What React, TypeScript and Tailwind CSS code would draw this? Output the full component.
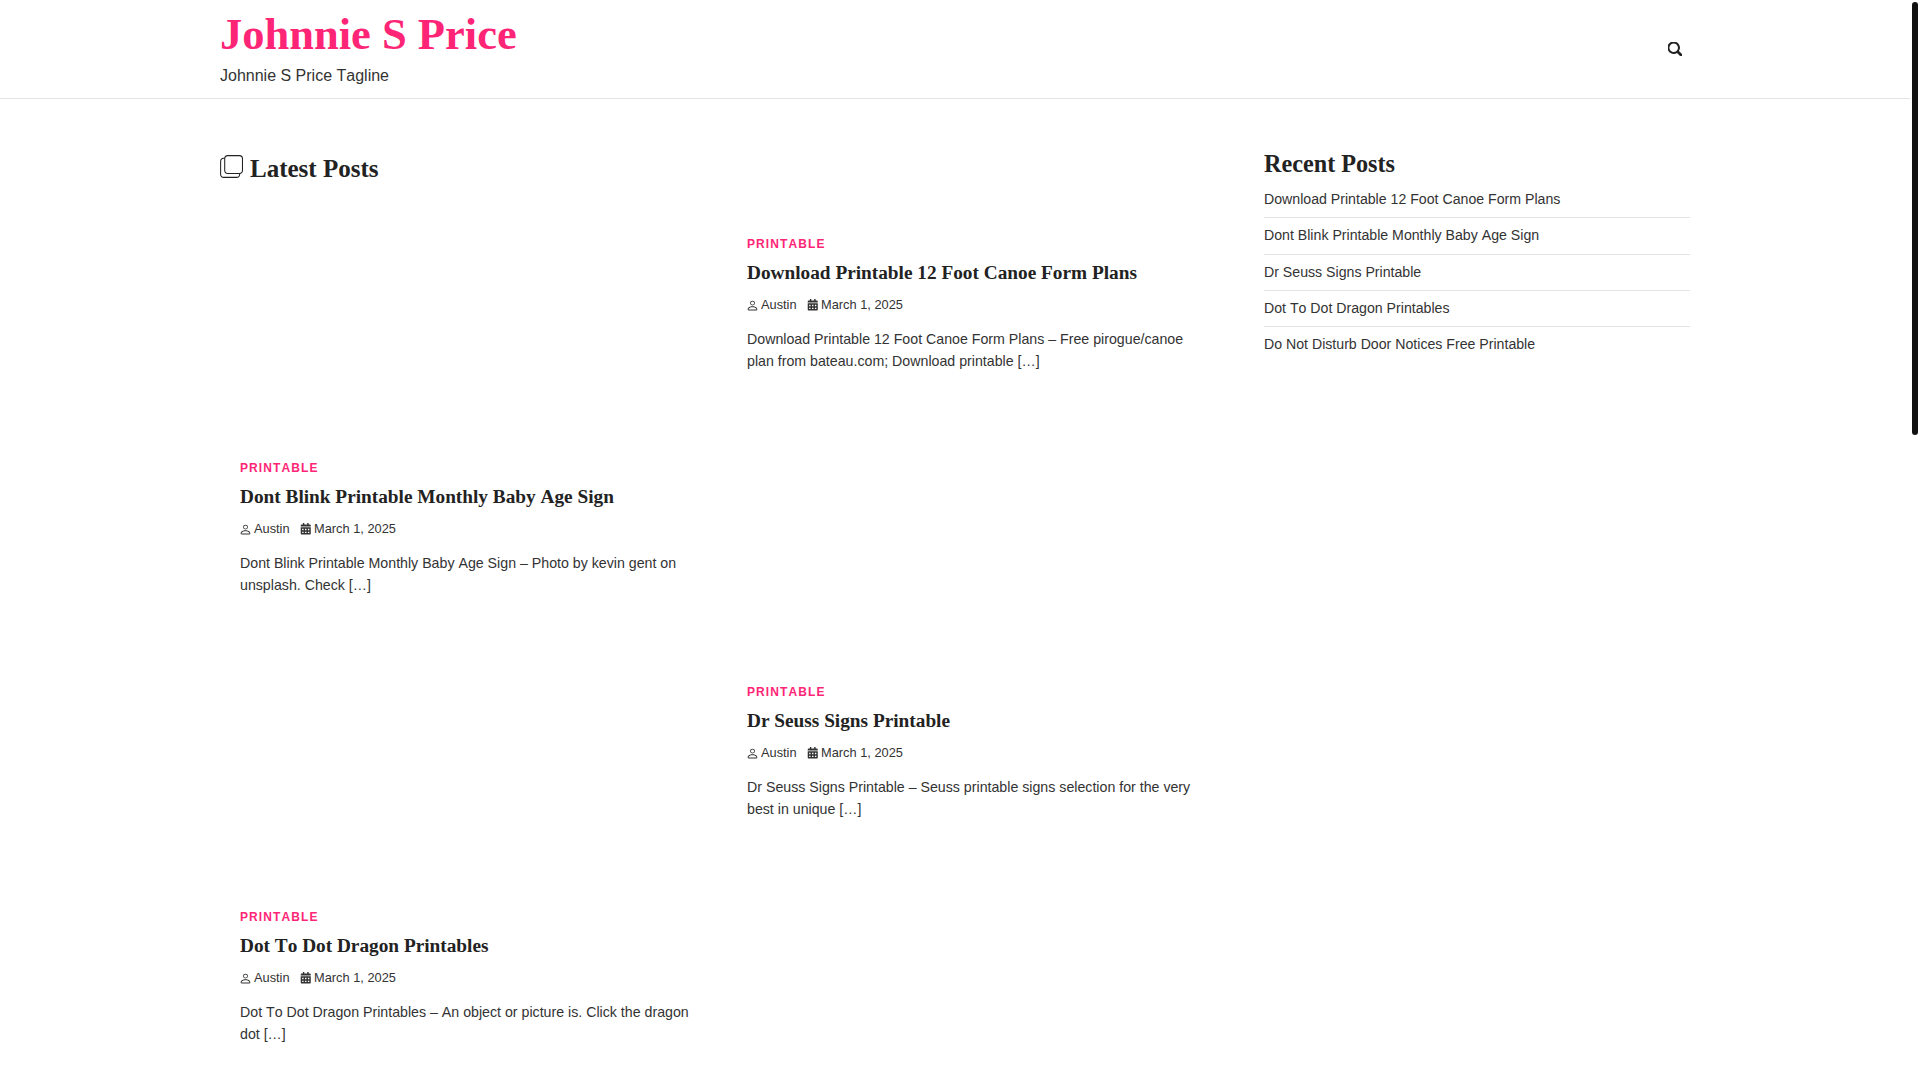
import { BsPerson, BsSearch } from "react-icons/bs";
import { FaCalendarAlt } from "react-icons/fa";

const serif = "font-['Liberation_Serif',serif]";

const recent = [
  "Download Printable 12 Foot Canoe Form Plans",
  "Dont Blink Printable Monthly Baby Age Sign",
  "Dr Seuss Signs Printable",
  "Dot To Dot Dragon Printables",
  "Do Not Disturb Door Notices Free Printable",
];

function PostCard({ title, excerpt, spacer }: { title: string; excerpt: string[]; spacer: string }) {
  return (
    <article className="px-5">
      {/* image area stays blank, pictures did not load */}
      <div className={spacer} />
      <span className="block text-[12px] leading-[14px] font-bold tracking-[1.1px] text-[#ff2576]">PRINTABLE</span>
      <h2 className={`${serif} mt-[9px] text-[19.3px] leading-[26px] font-bold text-[#222222]`}>{title}</h2>
      <div className="mt-[9px] flex items-center gap-[10px] text-[12.8px] leading-[20px] text-[#333333]">
        <span className="flex items-center gap-[2px]">
          <BsPerson className="-ml-[1px] size-[13px]" />
          Austin
        </span>
        <span className="flex items-center gap-[3px]">
          <FaCalendarAlt className="size-[11.5px]" />
          March 1, 2025
        </span>
      </div>
      <p className="mt-[13px] text-[14.2px] leading-[22px] text-[#333333]">
        {excerpt[0]}
        <br />
        {excerpt[1]}
      </p>
    </article>
  );
}

export default function App() {
  return (
    <div className="flex h-screen overflow-hidden bg-white font-['Liberation_Sans',sans-serif] [font-kerning:none]">
      <div className="min-w-0 flex-1">
        <header className="h-[99px] border-b border-[#e4e4e4]">
          <div className="mx-[220px] flex h-full items-start justify-between">
            <div>
              <h1 className={`${serif} mt-[8px] text-[44.5px] leading-[52px] font-bold text-[#ff2576]`}>Johnnie S Price</h1>
              <p className="mt-[4px] text-[16px] leading-[24px] text-[#333333]">Johnnie S Price Tagline</p>
            </div>
            <BsSearch className="mt-[42px] mr-[8px] size-[14px] stroke-[1.2px] text-[#222222]" />
          </div>
        </header>

        <div className="mx-[220px] flex">
          <main className="w-[1004px]">
            <div className="mt-[54px] flex items-center gap-[7px]">
              <svg viewBox="0 0 22 22" fill="none" stroke="#222222" strokeWidth="1" className="mb-[5px] size-[23px]">
                <rect x="4.5" y="0.6" width="17" height="17" rx="3" />
                <path d="M4.5 3.2h-1.1a2.8 2.8 0 0 0-2.8 2.8v12.6a2.8 2.8 0 0 0 2.8 2.8h12.6a2.8 2.8 0 0 0 2.8-2.8v-1.1" />
              </svg>
              <h2 className={`${serif} text-[25px] leading-[32px] font-bold text-[#222222]`}>Latest Posts</h2>
            </div>
            <div className="flex">
              <div className="w-[507px]">
                <PostCard
                  spacer="h-[276px]"
                  title="Dont Blink Printable Monthly Baby Age Sign"
                  excerpt={["Dont Blink Printable Monthly Baby Age Sign – Photo by kevin gent on", "unsplash. Check […]"]}
                />
                <PostCard
                  spacer="h-[314px]"
                  title="Dot To Dot Dragon Printables"
                  excerpt={["Dot To Dot Dragon Printables – An object or picture is. Click the dragon", "dot […]"]}
                />
              </div>
              <div className="w-[497px]">
                <PostCard
                  spacer="h-[52px]"
                  title="Download Printable 12 Foot Canoe Form Plans"
                  excerpt={["Download Printable 12 Foot Canoe Form Plans – Free pirogue/canoe", "plan from bateau.com; Download printable […]"]}
                />
                <PostCard
                  spacer="h-[313px]"
                  title="Dr Seuss Signs Printable"
                  excerpt={["Dr Seuss Signs Printable – Seuss printable signs selection for the very", "best in unique […]"]}
                />
              </div>
            </div>
          </main>

          <aside className="ml-[40px] w-[426px] pt-[49px]">
            <h2 className={`${serif} text-[24.2px] leading-[32px] font-bold text-[#222222]`}>Recent Posts</h2>
            <ul className="mt-[2px] text-[14.15px] leading-[19.3px] text-[#333333]">
              {recent.map((item, i) => (
                <li key={item} className={`py-[8px] ${i < recent.length - 1 ? "border-b border-[#e4e4e4]" : ""}`}>
                  {item}
                </li>
              ))}
            </ul>
          </aside>
        </div>
      </div>

      {/* scrollbar */}
      <div className="w-[10px] shrink-0 pt-[2px] pr-[2px] pl-[2px]">
        <div className="h-[433px] rounded-full bg-[#111111]" />
      </div>
    </div>
  );
}
